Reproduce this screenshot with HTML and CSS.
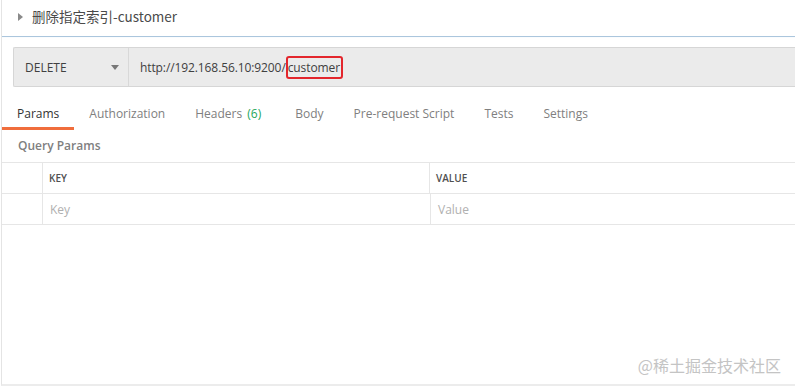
FILE: index.html
```html
<!DOCTYPE html>
<html lang="zh-CN">
<head>
  <meta charset="UTF-8" />
  <meta name="viewport" content="width=device-width, initial-scale=1.0"/>
  <title>删除指定索引-customer</title>
  <link rel="stylesheet" href="styles.css">
</head>
<body>

<div class="panel">
  <div class="title">
    <span class="caret"></span>
    <span class="title-text">删除指定索引-customer</span>
  </div>

  <div class="request">
    <div class="url-bar">
      <div class="method">
        <span>DELETE</span>
        <span class="arrow"></span>
      </div>
      <div class="url">http://192.168.56.10:9200/<span class="mark">customer</span></div>
    </div>
  </div>

  <nav class="tabs">
    <span class="tab active">Params</span>
    <span class="tab">Authorization</span>
    <span class="tab headers">Headers <em class="count">(6)</em></span>
    <span class="tab">Body</span>
    <span class="tab">Pre-request Script</span>
    <span class="tab">Tests</span>
    <span class="tab">Settings</span>
  </nav>

  <div class="section-label">Query Params</div>

  <div class="params">
    <div class="row head">
      <div class="cell check"></div>
      <div class="cell key">KEY</div>
      <div class="cell value">VALUE</div>
    </div>
    <div class="row">
      <div class="cell check"></div>
      <div class="cell key placeholder">Key</div>
      <div class="cell value placeholder">Value</div>
    </div>
  </div>

  <div class="watermark">@稀土掘金技术社区</div>
</div>

</body>
</html>
```

FILE: styles.css
```css
body {
  margin: 0;
  background: #fff;
  font-family: 'Open Sans', 'Noto Sans CJK SC', sans-serif;
  color: #505050;
  font-size: 12px;
}
.panel {
  position: relative;
  margin-left: 1px;
  height: 384px;
  border-left: 1px solid #e4e4e4;
  border-bottom: 2px solid #ececec;
  overflow: hidden;
}
.title {
  height: 36px;
  display: flex;
  align-items: center;
  padding-left: 16px;
  border-bottom: 1px solid #abc6dd;
}
.caret {
  width: 0;
  height: 0;
  border-top: 4px solid transparent;
  border-bottom: 4px solid transparent;
  border-left: 5px solid #8a8a8a;
  margin-right: 9px;
  margin-top: -2px;
}
.title-text {
  font-family: 'Noto Sans CJK SC', sans-serif;
  font-size: 13.5px;
  color: #4a4a4a;
  margin-top: -4px;
}
.request {
  padding: 9px 0 0 11px;
  border-top: 1px solid #fafcfe;
}
.url-bar {
  display: flex;
  height: 38px;
  background: #ebebeb;
  border: 1px solid #d6d6d6;
  border-right: none;
  border-radius: 2px 0 0 2px;
}
.method {
  width: 94px;
  padding: 0 9px 0 11px;
  display: flex;
  align-items: center;
  justify-content: space-between;
  border-right: 1px solid #d8d8d8;
  color: #404040;
}
.arrow {
  width: 0;
  height: 0;
  border-left: 4px solid transparent;
  border-right: 4px solid transparent;
  border-top: 5px solid #777;
}
.url {
  display: flex;
  align-items: center;
  padding-left: 11px;
  letter-spacing: -0.1px;
  color: #404040;
}
.mark {
  line-height: 17px;
  padding: 1px 1px 1px 0;
  border: 2px solid #e3262c;
  border-radius: 3px;
}
.tabs {
  display: flex;
  margin-top: 13px;
}
.tab {
  padding: 0 15px;
  line-height: 27px;
  border-bottom: 3px solid transparent;
  color: #808080;
}
.tab.headers {
  padding-right: 19px;
}
.tab.active {
  color: #333;
  border-bottom-color: #f06d3c;
}
.count {
  font-style: normal;
  margin-left: 2px;
  color: #26a65b;
}
.section-label {
  height: 32px;
  line-height: 31px;
  padding-left: 16px;
  font-weight: 600;
  color: #808080;
}
.params {
  border-top: 1px solid #e6e6e6;
}
.row {
  display: flex;
  height: 30px;
  border-bottom: 1px solid #e6e6e6;
}
.cell {
  display: flex;
  align-items: center;
  padding-left: 6px;
}
.check {
  width: 40px;
  padding: 0;
  border-right: 1px solid #e6e6e6;
}
.key {
  width: 380px;
  border-right: 1px solid #e6e6e6;
}
.value {
  flex: 1;
}
.head .cell {
  font-size: 10px;
  font-weight: 600;
  color: #505050;
}
.placeholder {
  color: #b0b0b0;
  padding-left: 7px;
}
.watermark {
  position: absolute;
  right: 14px;
  top: 353px;
  font-family: 'Noto Sans CJK SC', sans-serif;
  font-size: 16px;
  color: #c4c4c4;
}
```
